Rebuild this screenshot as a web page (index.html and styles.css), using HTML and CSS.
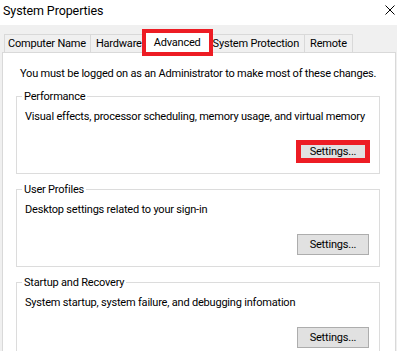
FILE: index.html
```html
<!DOCTYPE html>
<html lang="en">
  <head>
    <meta charset="utf-8" />
    <title>System Properties</title>
    <link rel="stylesheet" href="styles.css">
  </head>

  <body>
    <div class="window">
      <div class="titlebar">
        <span class="title">System Properties</span>
        <svg class="close" width="10" height="10" viewBox="0 0 10 10">
          <path d="M0.5 0.5 L9.5 9.5 M9.5 0.5 L0.5 9.5" stroke="#000" stroke-width="1" fill="none" />
        </svg>
      </div>

      <!-- Tab strip -->
      <div class="tabs">
        <div class="tab">Computer Name</div>
        <div class="tab">Hardware</div>
        <div class="tab selected">Advanced</div>
        <div class="tab">System Protection</div>
        <div class="tab">Remote</div>
      </div>

      <div class="panel">
        <p class="intro">You must be logged on as an Administrator to make most of these changes.</p>

        <fieldset class="group">
          <legend>Performance</legend>
          <p class="desc">Visual effects, processor scheduling, memory usage, and virtual memory</p>
          <div class="actions"><button class="btn marked">Settings...</button></div>
        </fieldset>

        <fieldset class="group">
          <legend>User Profiles</legend>
          <p class="desc">Desktop settings related to your sign-in</p>
          <div class="actions"><button class="btn">Settings...</button></div>
        </fieldset>

        <fieldset class="group">
          <legend>Startup and Recovery</legend>
          <p class="desc">System startup, system failure, and debugging infomation</p>
          <div class="actions"><button class="btn">Settings...</button></div>
        </fieldset>
      </div>
    </div>
  </body>
</html>
```

FILE: styles.css
```css
body {
  margin: 0;
  padding: 0;
  background-color: #f0f0f0;
  font-family: Roboto, "Liberation Sans", sans-serif;
  font-size: 11px;
  letter-spacing: -0.2px;
  color: #000;
}

.window {
  width: 397px;
  height: 351px;
  overflow: hidden;
}

.titlebar {
  height: 25px;
  background-color: #fff;
  display: flex;
  align-items: center;
  justify-content: space-between;
  padding: 0 2px 0 3px;
  box-sizing: border-box;
}

.title {
  font-size: 12.5px;
  letter-spacing: -0.1px;
  margin-top: -4px;
}

.close {
  display: block;
  margin-top: -5px;
}

.tabs {
  display: flex;
  align-items: flex-end;
  margin-top: 7px;
  padding-left: 4px;
}

.tab {
  height: 18px;
  line-height: 17px;
  padding: 0 5px;
  border: 1px solid #d9d9d9;
  border-bottom: none;
  box-sizing: border-box;
  margin-left: -1px;
  background-color: #f0f0f0;
}

.tab:first-child {
  margin-left: 0;
  padding: 0 4px 0 3px;
}

.tab.selected {
  height: 21px;
  line-height: 19px;
  padding: 0 8px;
  margin: 0 -2px -1px -3px;
  background-color: #fff;
  position: relative;
  z-index: 1;
  outline: 4px solid #ed1c24;
  outline-offset: -1px;
}

.panel {
  margin: 0 1px 0 2px;
  height: 320px;
  box-sizing: border-box;
  border: 1px solid #d9d9d9;
  background-color: #fff;
  padding: 13px 15px 0 13px;
}

.intro {
  margin: 0 0 8px 4px;
  line-height: 15px;
}

.group {
  margin: 0 0 8px 0;
  padding: 0 10px 11px 8px;
  border: 1px solid #dcdcdc;
}

.group legend {
  padding: 0 2px;
  margin-left: -3px;
  line-height: 15px;
}

.desc {
  margin: 5px 0 0 0;
  line-height: 15px;
}

.actions {
  display: flex;
  justify-content: flex-end;
  margin-top: 17px;
}

.btn {
  width: 72px;
  height: 21px;
  padding: 0;
  font-family: inherit;
  font-size: 11px;
  letter-spacing: -0.2px;
  background-color: #e1e1e1;
  border: 1px solid #adadad;
  color: #000;
}

.btn.marked {
  outline: 5px solid #ed1c24;
  outline-offset: -4px;
}
```
